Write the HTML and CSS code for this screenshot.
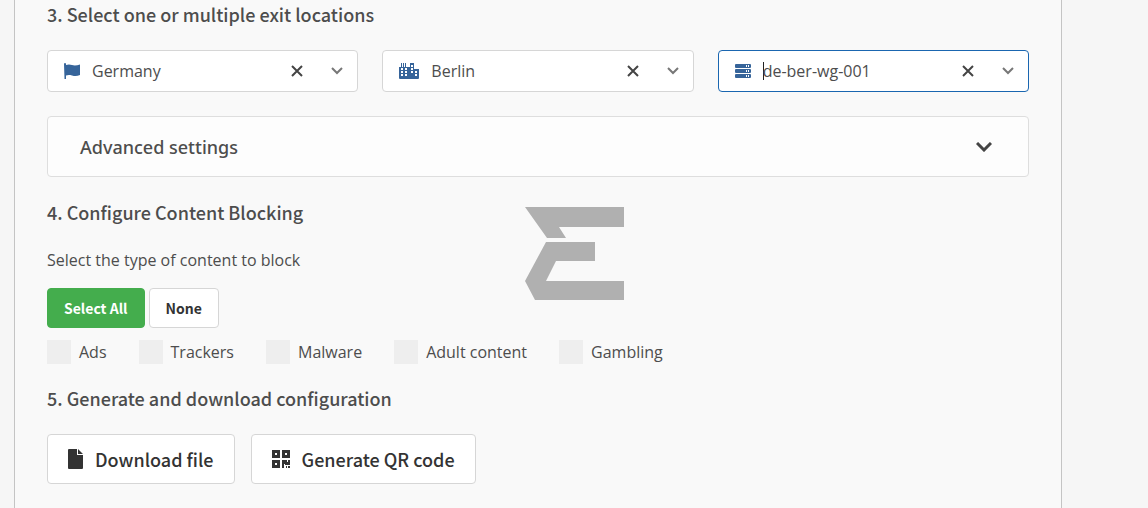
FILE: index.html
```html
<!DOCTYPE html>
<html lang="en">

<head>
    <meta charset="utf-8">
    <meta name="viewport" content="width=device-width, initial-scale=1">
    <title>WireGuard configuration</title>
    <link rel="stylesheet" href="styles.css">
</head>

<body>
    <main class="panel">
        <h2>3. Select one or multiple exit locations</h2>
        <div class="locations">
            <div class="combo">
                <svg class="combo-icon" width="16" height="16" viewBox="0 0 16 16" aria-hidden="true">
                    <path d="M0 1a1 1 0 0 1 2 0v1c2-.8 4-.7 6 0s5 .5 8-.5v10.500c-3 1.300-5 1.300-8 .5s-4-.5-6 0v3.500H.500z" />
                </svg>
                <input type="text" value="Germany" aria-label="Country">
                <button type="button" class="combo-clear" aria-label="Clear country">
                    <svg width="12" height="12" viewBox="0 0 12 12"><path d="M1 1l10 10M11 1L1 11" /></svg>
                </button>
                <button type="button" class="combo-toggle" aria-label="Show countries">
                    <svg width="12" height="8" viewBox="0 0 12 8"><path d="M1 1l5 5 5-5" /></svg>
                </button>
            </div>
            <div class="combo">
                <svg class="combo-icon" width="20" height="16" viewBox="0 0 20 16" aria-hidden="true">
                    <path fill-rule="evenodd" d="M0 4h2V0h1v4h1V0h1v4h1V0h1v4h4V0h4v6h5v9a1 1 0 0 1-1 1H1a1 1 0 0 1-1-1z
                        M2 5v2h2V5zM6 5v2h2V5zM2 8v2h2V8zM6 8v2h2V8zM2 11v2h2v-2zM6 11v2h2v-2z
                        M12 2v2h2V2zM12 5v2h2V5zM12 8v2h2V8zM16 8v2h2V8zM16 11v2h2v-2z" />
                </svg>
                <input type="text" value="Berlin" aria-label="City">
                <button type="button" class="combo-clear" aria-label="Clear city">
                    <svg width="12" height="12" viewBox="0 0 12 12"><path d="M1 1l10 10M11 1L1 11" /></svg>
                </button>
                <button type="button" class="combo-toggle" aria-label="Show cities">
                    <svg width="12" height="8" viewBox="0 0 12 8"><path d="M1 1l5 5 5-5" /></svg>
                </button>
            </div>
            <div class="combo combo-active">
                <svg class="combo-icon" width="16" height="16" viewBox="0 0 16 16" aria-hidden="true">
                    <path fill-rule="evenodd" d="M1 1h14a1 1 0 0 1 1 1v2a1 1 0 0 1-1 1H1a1 1 0 0 1-1-1V2a1 1 0 0 1 1-1z
                        M1 6h14a1 1 0 0 1 1 1v2a1 1 0 0 1-1 1H1a1 1 0 0 1-1-1V7a1 1 0 0 1 1-1z
                        M1 11h14a1 1 0 0 1 1 1v2a1 1 0 0 1-1 1H1a1 1 0 0 1-1-1v-2a1 1 0 0 1 1-1z
                        M11 2v2h1V2zM13 2v2h1V2zM11 7v2h1V7zM13 7v2h1V7zM11 12v2h1v-2zM13 12v2h1v-2z" />
                </svg>
                <span class="combo-caret"></span>
                <input type="text" value="de-ber-wg-001" aria-label="Server">
                <button type="button" class="combo-clear" aria-label="Clear server">
                    <svg width="12" height="12" viewBox="0 0 12 12"><path d="M1 1l10 10M11 1L1 11" /></svg>
                </button>
                <button type="button" class="combo-toggle" aria-label="Show servers">
                    <svg width="12" height="8" viewBox="0 0 12 8"><path d="M1 1l5 5 5-5" /></svg>
                </button>
            </div>
        </div>

        <button type="button" class="advanced" aria-expanded="false">
            Advanced settings
            <svg width="16" height="10" viewBox="0 0 16 10" aria-hidden="true"><path d="M1 1l7 7 7-7" /></svg>
        </button>

        <h2>4. Configure Content Blocking</h2>
        <p>Select the type of content to block</p>
        <div class="select-buttons">
            <button type="button" class="btn btn-green">Select All</button>
            <button type="button" class="btn">None</button>
        </div>
        <div class="blocking">
            <label><input type="checkbox" name="ads">Ads</label>
            <label><input type="checkbox" name="trackers">Trackers</label>
            <label><input type="checkbox" name="malware">Malware</label>
            <label><input type="checkbox" name="adult">Adult content</label>
            <label><input type="checkbox" name="gambling">Gambling</label>
        </div>

        <h2>5. Generate and download configuration</h2>
        <div class="downloads">
            <button type="button" class="btn btn-large">
                <svg width="15" height="20" viewBox="0 0 15 20" aria-hidden="true">
                    <path d="M0 1a1 1 0 0 1 1-1h8v6h6v13a1 1 0 0 1-1 1H1a1 1 0 0 1-1-1zM10 0l5 5h-5z" />
                </svg>
                Download file
            </button>
            <button type="button" class="btn btn-large">
                <svg width="18" height="18" viewBox="0 0 18 18" aria-hidden="true">
                    <path fill-rule="evenodd" d="M0 0h8v8H0zM3 3v2h2V3zM10 0h8v8h-8zM13 3v2h2V3zM0 10h8v8H0zM3 13v2h2v-2z
                        M10 10h5v2h1v-2h2v5h-5v-1h-1v4h-2zM14 16h1v2h-1zM16 16h2v2h-2z" />
                </svg>
                Generate QR code
            </button>
        </div>
    </main>

    <svg class="watermark" width="100" height="94" viewBox="-1 0 100 94" aria-hidden="true">
        <path d="M0 0h99v20H34l7 11H22zM21 35h49v19H31L21 74h78v19H10L0 74z" />
    </svg>
</body>

</html>
```
FILE: styles.css
```css
*,
*:before,
*:after {
    box-sizing: border-box;
}

body {
    margin: 0;
    background: #f6f6f6;
    color: #4d4d4d;
    font: 16px/24px "Open Sans", sans-serif;
}

.panel {
    min-height: 100vh;
    margin: 0 86px 0 14px;
    padding: 2px 32px 24px;
    background: #f9f9f9;
    border: solid #c4c4c4;
    border-width: 0 1px;
}

h2 {
    margin: 0 0 24px;
    font: 500 18px/24px "Source Sans Pro", "Noto Sans CJK SC", sans-serif;
    color: #4d4d4d;
}

p {
    margin: 0 0 16px;
}

button,
input {
    margin: 0;
    font: inherit;
    color: inherit;
}

/* location pickers */
.locations {
    display: grid;
    grid-template-columns: repeat(3, minmax(0, 1fr));
    gap: 24px;
    margin-bottom: 24px;
}

.combo {
    display: flex;
    align-items: center;
    height: 42px;
    padding: 0 8px 0 16px;
    background: #fff;
    border: 1px solid #d6d6d6;
    border-radius: 4px;
}

.combo-active {
    border-color: #1a66b0;
}

.combo input {
    flex: 1;
    min-width: 0;
    padding: 0;
    border: 0;
    outline: 0;
    background: none;
}

.combo-icon {
    flex: none;
    margin-right: 12px;
    fill: #36649a;
}

.combo-caret {
    width: 1px;
    height: 18px;
    margin-right: -1px;
    background: #222;
}

.combo-clear,
.combo-toggle {
    display: flex;
    justify-content: center;
    flex: none;
    width: 24px;
    padding: 0;
    border: 0;
    background: none;
    fill: none;
    stroke: #444;
    stroke-width: 2;
}

.combo-toggle {
    margin-left: 16px;
    stroke: #777;
}

.advanced {
    display: flex;
    align-items: center;
    justify-content: space-between;
    width: 100%;
    height: 61px;
    margin-bottom: 23px;
    padding: 0 36px 0 32px;
    background: #fdfdfd;
    border: 1px solid #dedede;
    border-radius: 4px;
    font: 500 18px/24px "Noto Sans", sans-serif;
}

.advanced svg {
    fill: none;
    stroke: #444;
    stroke-width: 3;
}

/* buttons */
.btn {
    height: 40px;
    padding: 0 16px;
    background: #fff;
    border: 1px solid #d6d6d6;
    border-radius: 4px;
    color: #333;
    font: 600 14px/24px "Source Sans Pro", "Noto Sans CJK SC", sans-serif;
}

.btn-green {
    background: #44ad4d;
    border-color: #44ad4d;
    color: #fff;
}

.btn-large {
    display: flex;
    align-items: center;
    gap: 12px;
    height: 50px;
    padding: 0 20px;
    font-size: 18px;
    font-weight: 500;
}

.btn-large svg {
    fill: #333;
}

.select-buttons {
    display: flex;
    gap: 4px;
    margin-bottom: 12px;
}

.blocking {
    display: flex;
    flex-wrap: wrap;
    gap: 32px;
    margin-bottom: 22px;
}

.blocking label {
    display: flex;
    align-items: center;
    gap: 8px;
}

.blocking input {
    appearance: none;
    width: 24px;
    height: 24px;
    background: #eee;
}

.downloads {
    display: flex;
    gap: 16px;
}

.watermark {
    position: fixed;
    top: 50%;
    left: 50%;
    transform: translate(-50%, -50%);
    fill: #b0b0b0;
    pointer-events: none;
}
```
